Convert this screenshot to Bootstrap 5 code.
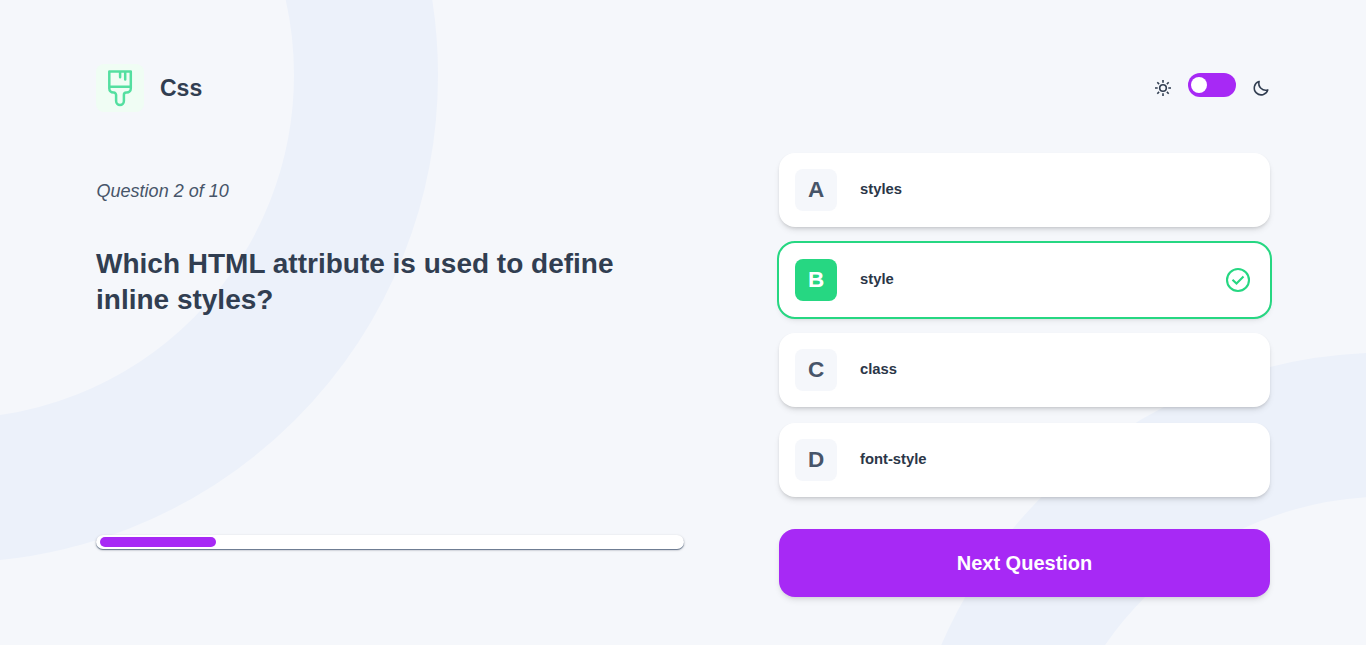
<!DOCTYPE html>
<html lang="en">
<head>
<meta charset="utf-8">
<meta name="viewport" content="width=device-width, initial-scale=1">
<title>Css quiz</title>
<link href="https://cdn.jsdelivr.net/npm/bootstrap@5.3.0/dist/css/bootstrap.min.css" rel="stylesheet">
<style>
body{font-family:"Liberation Sans",Arial,sans-serif;background:#f5f7fb;color:#313e51;height:100vh;overflow:hidden}
.backdrop{top:0;left:0;width:1366px;height:645px;z-index:-1}
.quiz{padding:64px 96px 0}
.quiz-head{height:48px}
.topic-icon{width:48px;height:48px;border-radius:8px;background:#f0fdf4}
.topic-name{font-size:23px}
.theme-toggle{width:48px;height:24px;border-radius:12px;background:#a729f5;padding:4px 3px;margin:0 16px 6px}
.theme-toggle span{width:16px;height:16px}
.question-side{width:587.5px;padding-top:28px;margin-top:40px}
.counter{font-size:18px;line-height:22px;color:#475569;margin-bottom:44px;padding-left:.6px}
.question{font-size:28px;line-height:36px;height:72px;width:560px;margin-bottom:217px}
.meter{height:14px;border-radius:8px;padding:2px 4px;box-shadow:0 1px 1px #64748b,0 1px 3px rgba(0,0,0,.2)}
.meter .progress-bar{height:10px;border-radius:6px;background:#a729f5}
.answers-side{width:491px;gap:16px;margin-top:41px}
.answer{height:74px;padding:0 16px;border-radius:16px;border:0;box-shadow:0 4px 6px -1px rgba(0,0,0,.1),0 2px 4px -2px rgba(0,0,0,.2);font-size:14.8px;color:#2b3648}
.answer .label-text{padding-bottom:2px}
.answer .letter{width:42px;height:42px;border-radius:8px;background:#f5f7fb;color:#475569;font-size:22.5px;line-height:26px;padding-bottom:1px;margin-right:23px}
.answer.correct{outline:2px solid #26d782}
.answer.correct .letter{background:#26d782;color:#fff}
.next-btn,.next-btn:hover{height:68px;border-radius:16px;background:#a729f5;color:#fff;font-size:20px;margin-top:16px;box-shadow:0 4px 6px -1px rgba(0,0,0,.1),0 2px 4px -2px rgba(0,0,0,.1)}
</style>
</head>
<body>
<svg class="backdrop position-absolute" viewBox="0 0 1366 645" fill="none" stroke="#ecf1fa" stroke-width="144"><circle cx="-49.5" cy="75" r="415.5"/><circle cx="1388" cy="840" r="415.5"/></svg>
<main class="quiz">
  <header class="quiz-head d-flex align-items-center justify-content-between">
    <div class="d-flex align-items-center gap-3">
      <div class="topic-icon d-flex align-items-center justify-content-center">
        <svg width="36" height="46" viewBox="102 64 36 46" fill="none" stroke="#54dfa0" stroke-width="2.5" stroke-linecap="round" stroke-linejoin="round"><path d="M109.3 70.4h21.5v17.2a4 4 0 0 1-4 4h-.6a2.300 2.300 0 0 0-2.300 2.300v6.200a3.900 3.900 0 0 1-7.800 0v-6.200a2.300 2.300 0 0 0-2.300-2.300h-.5a4 4 0 0 1-4-4zM109.300 85.800h21.500M120.100 71v5.200M125.200 71v7.500"/></svg>
      </div>
      <div class="topic-name fw-bold">Css</div>
    </div>
    <div class="d-flex align-items-center">
      <svg width="18" height="18" viewBox="0 0 18 18" fill="none" stroke="#313e51" stroke-width="1.6"><circle cx="9" cy="9" r="3.3"/><path d="M9 1v2.700M9 14.300v2.700M1 9h2.700M14.300 9h2.700M3.300 3.300l1.800 1.800M12.900 12.900l1.800 1.800M3.300 14.700l1.800-1.800M12.900 5.100l1.800-1.800"/></svg>
      <div class="theme-toggle d-flex align-items-center"><span class="bg-white rounded-circle"></span></div>
      <svg width="18" height="18" viewBox="0 0 18 18" fill="none" stroke="#313e51" stroke-width="1.6" stroke-linejoin="round"><path d="M7.100 2.400A6.900 6.900 0 1 0 15.800 10.900 6.900 6.900 0 0 1 7.100 2.400z"/></svg>
    </div>
  </header>
  <div class="d-flex justify-content-between">
    <section class="question-side">
      <p class="counter fst-italic">Question 2 of 10</p>
      <h1 class="question fw-bold">Which HTML attribute is used to define inline styles?</h1>
      <div class="meter bg-white"><div class="progress-bar" style="width:20%"></div></div>
    </section>
    <section class="answers-side d-flex flex-column">
      <button class="answer bg-white d-flex align-items-center fw-bold"><span class="letter d-flex align-items-center justify-content-center">A</span><span class="label-text">styles</span></button>
      <button class="answer correct bg-white d-flex align-items-center fw-bold"><span class="letter d-flex align-items-center justify-content-center">B</span><span class="label-text">style</span>
        <svg class="ms-auto" width="32" height="32" viewBox="0 0 32 32" fill="none" stroke="#26d782" stroke-width="2.100"><circle cx="16" cy="16" r="11"/><path d="M10.500 15.800l4 3.800 7-7"/></svg></button>
      <button class="answer bg-white d-flex align-items-center fw-bold"><span class="letter d-flex align-items-center justify-content-center">C</span><span class="label-text">class</span></button>
      <button class="answer bg-white d-flex align-items-center fw-bold"><span class="letter d-flex align-items-center justify-content-center">D</span><span class="label-text">font-style</span></button>
      <button class="btn next-btn border-0 fw-bold">Next Question</button>
    </section>
  </div>
</main>
<script src="https://cdn.jsdelivr.net/npm/bootstrap@5.3.0/dist/js/bootstrap.bundle.min.js"></script>
</body>
</html>
